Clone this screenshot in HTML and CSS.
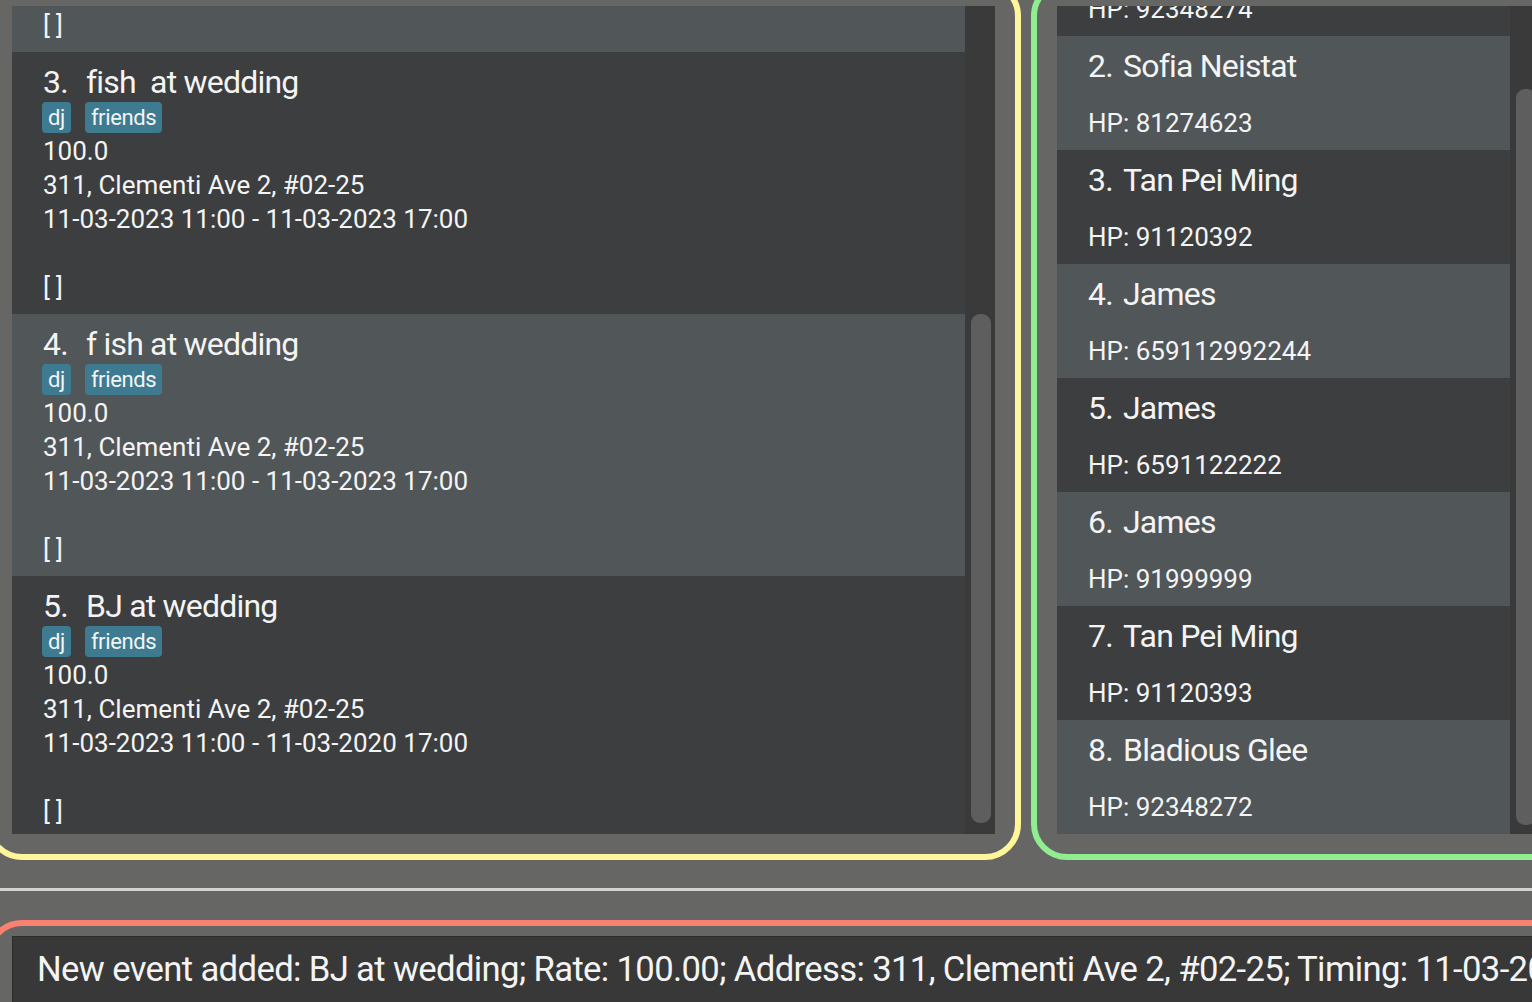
FILE: index.html
```html
<!DOCTYPE html>
<html lang="en">
<head>
<meta charset="utf-8">
<title>Event Book</title>
<link rel="stylesheet" href="styles.css">
</head>
<body>
<div class="app">
  <div class="panels">
    <section class="panel panel-events">
      <div class="list">
        <div class="list-items">
          <div class="event-card odd partial">
            <div class="line brackets">[]</div>
          </div>
          <div class="event-card even">
            <div class="card-title"><span class="card-id">3.</span><span class="card-name">fish  at wedding</span></div>
            <div class="tags"><span class="tag">dj</span><span class="tag">friends</span></div>
            <div class="line">100.0</div>
            <div class="line">311, Clementi Ave 2, #02-25</div>
            <div class="line">11-03-2023 11:00 - 11-03-2023 17:00</div>
            <div class="line"></div>
            <div class="line brackets">[]</div>
          </div>
          <div class="event-card odd">
            <div class="card-title"><span class="card-id">4.</span><span class="card-name">f ish at wedding</span></div>
            <div class="tags"><span class="tag">dj</span><span class="tag">friends</span></div>
            <div class="line">100.0</div>
            <div class="line">311, Clementi Ave 2, #02-25</div>
            <div class="line">11-03-2023 11:00 - 11-03-2023 17:00</div>
            <div class="line"></div>
            <div class="line brackets">[]</div>
          </div>
          <div class="event-card even">
            <div class="card-title"><span class="card-id">5.</span><span class="card-name">BJ at wedding</span></div>
            <div class="tags"><span class="tag">dj</span><span class="tag">friends</span></div>
            <div class="line">100.0</div>
            <div class="line">311, Clementi Ave 2, #02-25</div>
            <div class="line">11-03-2023 11:00 - 11-03-2020 17:00</div>
            <div class="line"></div>
            <div class="line brackets">[]</div>
          </div>
        </div>
        <div class="track track-events"><div class="thumb"></div></div>
      </div>
    </section>
    <section class="panel panel-persons">
      <div class="list">
        <div class="list-items">
          <div class="person-card even partial">
            <div class="person-phone">HP: 92348274</div>
          </div>
          <div class="person-card odd">
            <div class="person-name"><span class="person-id">2.</span><span>Sofia Neistat</span></div>
            <div class="person-phone">HP: 81274623</div>
          </div>
          <div class="person-card even">
            <div class="person-name"><span class="person-id">3.</span><span>Tan Pei Ming</span></div>
            <div class="person-phone">HP: 91120392</div>
          </div>
          <div class="person-card odd">
            <div class="person-name"><span class="person-id">4.</span><span>James</span></div>
            <div class="person-phone">HP: 659112992244</div>
          </div>
          <div class="person-card even">
            <div class="person-name"><span class="person-id">5.</span><span>James</span></div>
            <div class="person-phone">HP: 6591122222</div>
          </div>
          <div class="person-card odd">
            <div class="person-name"><span class="person-id">6.</span><span>James</span></div>
            <div class="person-phone">HP: 91999999</div>
          </div>
          <div class="person-card even">
            <div class="person-name"><span class="person-id">7.</span><span>Tan Pei Ming</span></div>
            <div class="person-phone">HP: 91120393</div>
          </div>
          <div class="person-card odd">
            <div class="person-name"><span class="person-id">8.</span><span>Bladious Glee</span></div>
            <div class="person-phone">HP: 92348272</div>
          </div>
        </div>
        <div class="track track-persons"><div class="thumb"></div></div>
      </div>
    </section>
  </div>
  <div class="divider"></div>
  <section class="panel-result">
    <div class="result-box">New event added: BJ at wedding; Rate: 100.00; Address: 311, Clementi Ave 2, #02-25; Timing: 11-03-2023 11:00 - 11-03-2020 17:00</div>
  </section>
</div>
</body>
</html>
```

FILE: styles.css
```css
* { box-sizing: border-box; }

html, body {
  margin: 0;
  padding: 0;
}

body {
  width: 1532px;
  height: 1002px;
  overflow: hidden;
  background: #666664;
  color: #f4f4f4;
  font-family: Roboto, Inter, "Noto Sans", sans-serif;
}

.app {
  margin: -20px 0 0 -14px;
  width: 1600px;
}

.panels {
  display: flex;
  gap: 10px;
  height: 880px;
}

.panel {
  display: flex;
  height: 880px;
  padding: 20px;
  border: 6px solid;
  border-radius: 36px;
  flex: none;
}

.panel-events {
  width: 1035px;
  border-color: #fff59a;
}

.panel-persons {
  width: 535px;
  border-color: #90ee90;
}

.list {
  flex: 1;
  display: flex;
  overflow: hidden;
}

.list-items {
  flex: 1;
  display: flex;
  flex-direction: column;
  overflow: hidden;
}

.track {
  flex: none;
  width: 30px;
  background: #3a3a3a;
}

.thumb {
  width: 20px;
  margin-left: 6px;
  background: #5e5e5e;
  border-radius: 9px;
}

.track-events .thumb {
  margin-top: 308px;
  height: 509px;
}

.track-persons .thumb {
  margin-top: 83px;
  height: 736px;
}

.even { background: #3c3e3f; }
.odd { background: #515658; }

.event-card {
  flex: none;
  height: 262px;
  padding: 11px 31px 10px;
}

.event-card.partial,
.person-card.partial {
  display: flex;
  flex-direction: column;
  justify-content: flex-end;
  overflow: hidden;
}

.event-card.partial {
  height: 46px;
}

.card-title,
.person-name {
  display: flex;
  font-size: 32px;
  line-height: 39px;
  height: 39px;
  white-space: pre;
  letter-spacing: -0.8px;
}

.card-id {
  width: 43px;
  flex: none;
}

.person-id {
  width: 35px;
  flex: none;
}

.tags {
  display: flex;
  gap: 14px;
  height: 32px;
  margin-left: -1px;
}

.tag {
  height: 31px;
  padding: 0 6px;
  background: #3e7b91;
  border-radius: 4px;
  font-size: 22px;
  line-height: 31px;
  letter-spacing: -0.4px;
}

.line {
  height: 34px;
  font-size: 26px;
  line-height: 34px;
  white-space: pre;
}

.brackets {
  letter-spacing: 6px;
}

.person-card {
  flex: none;
  height: 114px;
  padding: 11px 31px 10px;
}

.person-card.partial {
  height: 30px;
}

.person-phone {
  flex: none;
  height: 34px;
  margin-top: 20px;
  font-size: 26px;
  line-height: 34px;
  white-space: pre;
}

.person-card.partial .person-phone {
  margin-top: 0;
}

.divider {
  height: 3px;
  margin: 28px 0 29px;
  background: #d3d3d3;
}

.panel-result {
  height: 200px;
  padding: 10px 20px 0;
  border: 6px solid #fa8072;
  border-radius: 36px;
}

.result-box {
  height: 180px;
  padding: 12px 24px;
  background: #383838;
  border-top: 1px solid #2c2c2c;
  border-left: 1px solid #2c2c2c;
  font-size: 34.67px;
  letter-spacing: -0.65px;
  white-space: nowrap;
  overflow: hidden;
}
```
